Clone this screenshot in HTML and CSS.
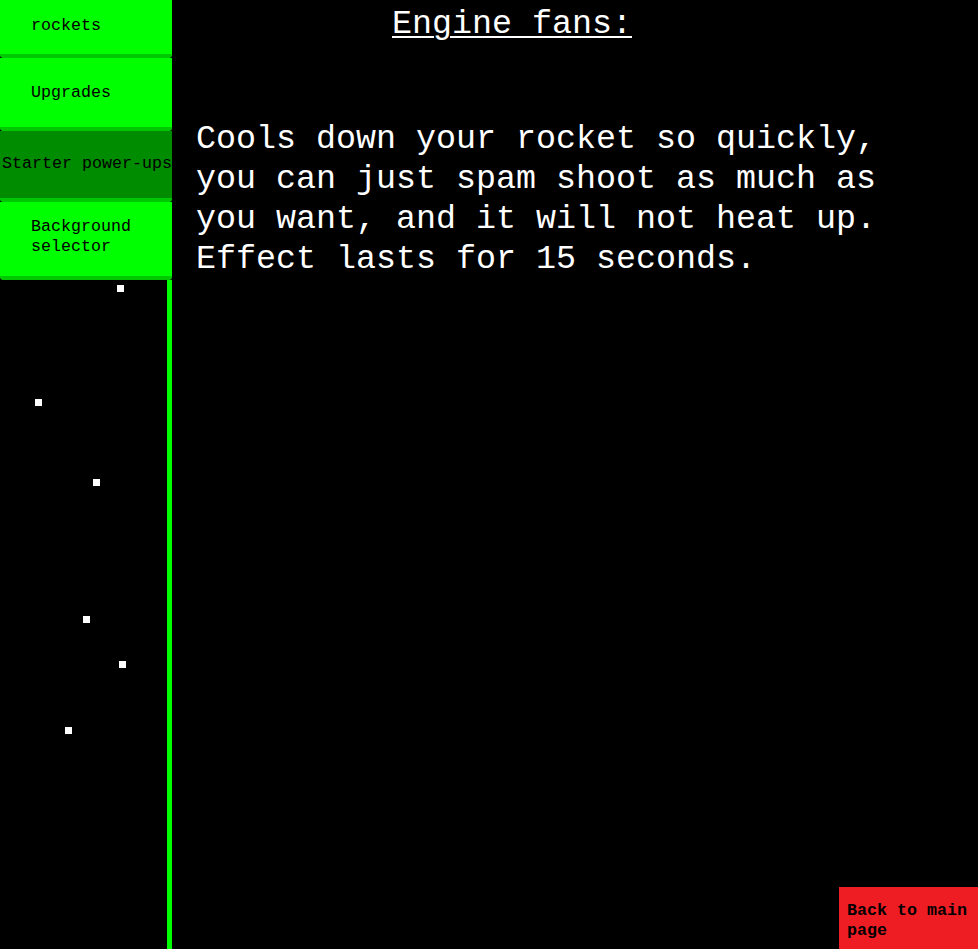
FILE: index.html
```html
<!DOCTYPE html>
<html lang="en">
<head>
<meta charset="utf-8">
<title>Starter power-ups</title>
<link rel="stylesheet" href="styles.css">
</head>
<body>
<div class="page">
  <nav class="sidebar">
    <a class="nav-item nav-item--first" href="#">rockets</a>
    <a class="nav-item nav-item--upgrades" href="#">Upgrades</a>
    <a class="nav-item nav-item--active" href="#">Starter power-ups</a>
    <a class="nav-item nav-item--bg" href="#">Background selector</a>
    <div class="sidebar-rest">
      <span class="star" style="left:117px;top:5px"></span>
      <span class="star" style="left:35px;top:119px"></span>
      <span class="star" style="left:93px;top:199px"></span>
      <span class="star" style="left:83px;top:336px"></span>
      <span class="star" style="left:119px;top:381px"></span>
      <span class="star" style="left:65px;top:447px"></span>
    </div>
  </nav>
  <main class="content">
    <h1 class="title">Engine fans:</h1>
    <p class="description">Cools down your rocket so quickly, you can just spam shoot as much as you want, and it will not heat up. Effect lasts for 15 seconds.</p>
  </main>
</div>
<a class="back-button" href="#">Back to main page</a>
</body>
</html>
```

FILE: styles.css
```css
html, body {
  margin: 0;
  padding: 0;
  background: #000;
  overflow: hidden;
}

body {
  font-family: "Liberation Mono", "DejaVu Sans Mono", monospace;
  color: #fff;
}

.page {
  display: flex;
  height: 100vh;
}

.sidebar {
  width: 172px;
  flex: 0 0 172px;
  display: flex;
  flex-direction: column;
}

.nav-item {
  display: flex;
  align-items: center;
  box-sizing: content-box;
  padding-left: 31px;
  background: #00ff00;
  border-bottom: 4px solid #00c800;
  border-radius: 0 0 3px 3px;
  color: #000;
  text-decoration: none;
  font-size: 16.67px;
  line-height: 20px;
  white-space: normal;
}

.nav-item--first {
  height: 52px;
  padding-bottom: 2px;
}

.nav-item--upgrades {
  height: 69px;
}

.nav-item--active {
  height: 65px;
  padding-bottom: 2px;
  padding-left: 2px;
  background: #008c00;
  white-space: nowrap;
}

.nav-item--bg {
  height: 69px;
  padding-bottom: 5px;
  padding-right: 20px;
}

.sidebar-rest {
  position: relative;
  flex: 1;
  box-sizing: border-box;
  border-right: 5px solid #00ff00;
}

.star {
  position: absolute;
  width: 7px;
  height: 7px;
  background: #fff;
}

.content {
  flex: 1;
  padding-left: 24px;
}

.title {
  width: 632px;
  margin: 4px 0 0;
  text-align: center;
  font-size: 33.33px;
  line-height: 40px;
  font-weight: normal;
  text-decoration: underline;
  text-underline-offset: 3px;
  text-decoration-thickness: 2px;
}

.description {
  width: 700px;
  margin: 75px 0 0;
  font-size: 33.33px;
  line-height: 40px;
}

.back-button {
  position: fixed;
  left: 839px;
  bottom: 0;
  width: 140px;
  height: 48px;
  padding: 14px 0 0 8px;
  background: #ee1d24;
  color: #000;
  text-decoration: none;
  font-weight: bold;
  font-size: 16.67px;
  line-height: 20px;
}
```
